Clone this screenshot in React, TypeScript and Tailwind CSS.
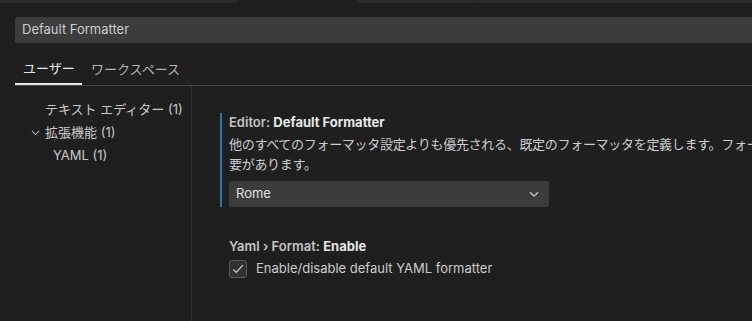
import React from 'react';

const font = "font-['Inter','Noto_Sans_CJK_JP',sans-serif]";

function ChevronDown({ className }: { className?: string }) {
  return (
    <svg viewBox="0 0 16 16" className={className} fill="none" stroke="currentColor" strokeWidth={1.3}>
      <path d="M3.5 6l4.5 4.5L12.5 6" />
    </svg>
  );
}

function Check() {
  return (
    <svg viewBox="0 0 16 16" className="w-[14px] h-[14px]" fill="none" stroke="#d8d8d8" strokeWidth={1.3}>
      <path d="M2.5 8.5l3.5 3.5 7.5-8.5" />
    </svg>
  );
}

export default function App() {
  return (
    <div className={`w-[752px] h-[321px] overflow-hidden bg-[#1f1f1f] text-[#cccccc] ${font}`}>
      {/* editor tab strip, cut off at the top */}
      <div className="flex h-[3px]">
        <div className="w-[237px] bg-[#2b2b2b]" />
        <div className="w-[120px]" />
        <div className="w-[118px] bg-[#2b2b2b] border-r border-[#1f1f1f]" />
        <div className="flex-1 bg-[#2b2b2b]" />
      </div>

      {/* search */}
      <div className="mt-[14px] ml-[15px] h-[26px] bg-[#3c3c3c] rounded-l-[2px] flex items-center pl-[7px] text-[13px] text-[#cccccc]">
        Default Formatter
      </div>

      {/* scope tabs */}
      <div className="ml-[15px] mt-[12px] flex border-b border-[#454545] text-[13px]">
        <div className="w-[67px] pl-[8px] h-[30px] flex items-center text-[#e7e7e7] border-b-2 border-[#e7e7e7] -mb-px">
          ユーザー
        </div>
        <div className="pl-[9px] h-[30px] flex items-center text-[#b4b4b4]">ワークスペース</div>
      </div>

      <div className="flex">
        {/* table of contents */}
        <div className="w-[192px] shrink-0 pt-[12px] border-r border-[#353535] h-[240px] text-[13px] text-[#c8c8c8]">
          <div className="h-[23px] flex items-center pl-[45px]">テキスト エディター (1)</div>
          <div className="h-[23px] flex items-center pl-[29px]">
            <ChevronDown className="w-[13px] h-[13px] mr-[3px] text-[#b0b0b0]" />
            拡張機能 (1)
          </div>
          <div className="h-[23px] flex items-center pl-[53px]">YAML (1)</div>
        </div>

        {/* settings */}
        <div className="pl-[28px] pt-[29px] min-w-0">
          <div className="border-l-2 border-[#217ba5] pl-[7px] w-[560px]">
            <div className="text-[13px] leading-[18px] -mt-[2px]">
              <span className="font-semibold text-[#c4c4c4]">Editor: </span>
              <span className="font-bold text-[#e7e7e7]">Default Formatter</span>
            </div>
            <div className="mt-[3px] text-[13px] leading-[20px] text-[#cccccc] tracking-[-0.3px] whitespace-nowrap">
              他のすべてのフォーマッタ設定よりも優先される、既定のフォーマッタを定義します。フォーマッタを提供する拡張機能の識別子である必
              <br />
              要があります。
            </div>
            <div className="mt-[7px] w-[320px] h-[26px] bg-[#3c3c3c] rounded-[2px] flex items-center justify-between pl-[7px] pr-[8px] text-[13px] text-[#e0e0e0]">
              <span>Rome</span>
              <ChevronDown className="w-[14px] h-[14px] text-[#d0d0d0]" />
            </div>
          </div>

          <div className="pl-[9px] mt-[30px]">
            <div className="text-[13px] leading-[18px]">
              <span className="font-semibold text-[#c4c4c4]">Yaml › Format: </span>
              <span className="font-bold text-[#e7e7e7]">Enable</span>
            </div>
            <div className="mt-[4px] flex items-center">
              <div className="w-[18px] h-[18px] rounded-[3px] bg-[#313131] border border-[#5a5a5a] flex items-center justify-center">
                <Check />
              </div>
              <span className="ml-[9px] text-[13px] text-[#cccccc]">Enable/disable default YAML formatter</span>
            </div>
          </div>
        </div>
      </div>
    </div>
  );
}
